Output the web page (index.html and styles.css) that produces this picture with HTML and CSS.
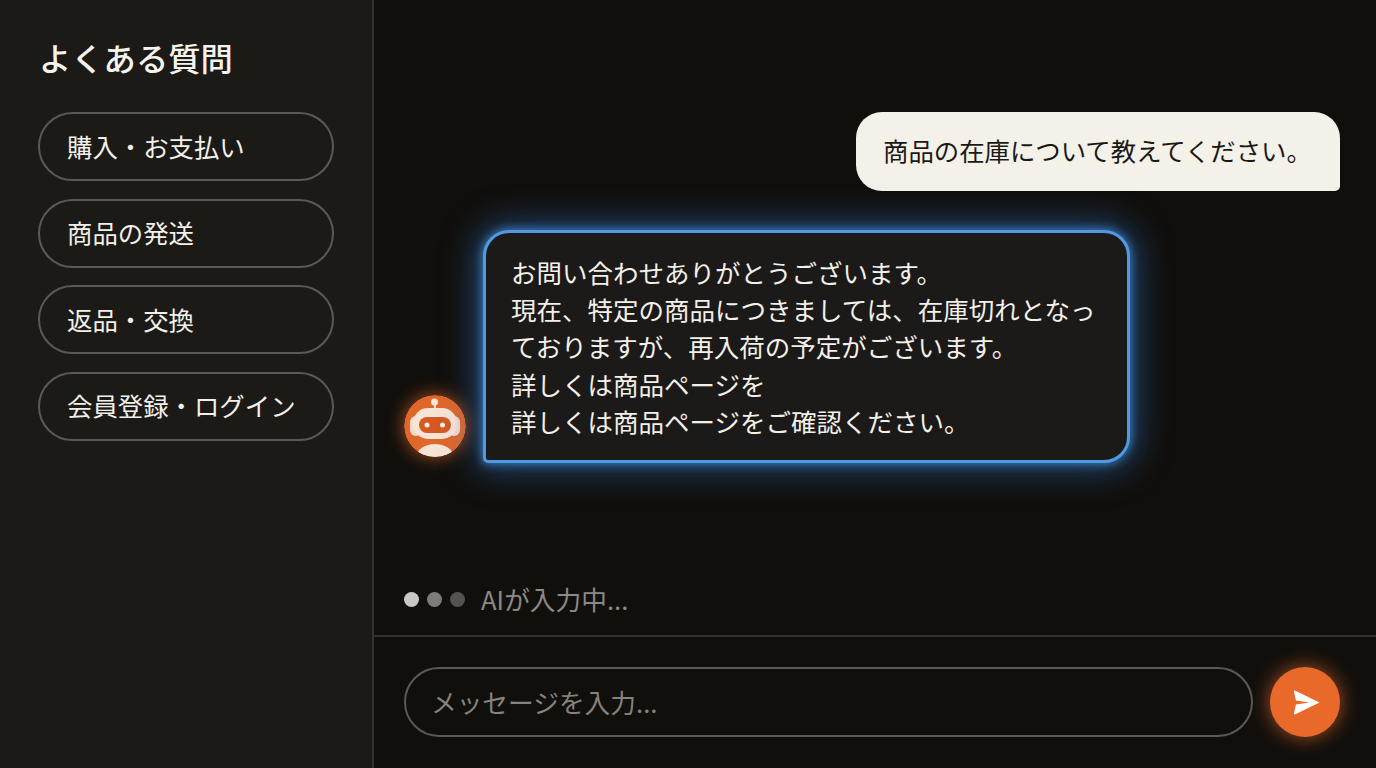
FILE: index.html
```html
<!DOCTYPE html>
<html lang="ja">
<head>
<meta charset="utf-8">
<title>よくある質問</title>
<link rel="stylesheet" href="styles.css">
</head>
<body>
<div class="app">
  <aside class="sidebar">
    <h1 class="title">よくある質問</h1>
    <nav class="faq">
      <a class="pill">購入・お支払い</a>
      <a class="pill">商品の発送</a>
      <a class="pill">返品・交換</a>
      <a class="pill">会員登録・ログイン</a>
    </nav>
  </aside>
  <main class="chat">
    <section class="messages">
      <div class="bubble-user">商品の在庫について教えてください。</div>
      <div class="ai-row">
        <svg class="avatar" viewBox="0 0 62 62" aria-hidden="true">
          <defs><clipPath id="avatar-clip"><circle cx="31" cy="31" r="31"/></clipPath></defs>
          <circle cx="31" cy="31" r="31" fill="#e0662a"/>
          <rect x="30" y="9" width="2" height="6" fill="#f6e6da"/>
          <circle cx="30.500" cy="7" r="3.500" fill="#f8e8dc"/>
          <rect x="6" y="21" width="12" height="20" rx="6" fill="#f4dccb"/>
          <rect x="44" y="21" width="12" height="20" rx="6" fill="#f4dccb"/>
          <rect x="9" y="13" width="44" height="31" rx="15" fill="#f8e4d6"/>
          <rect x="15" y="22" width="32" height="16" rx="8" fill="#d45a22"/>
          <circle cx="23" cy="30" r="2.500" fill="#fbeee4"/>
          <circle cx="38.500" cy="30" r="2.500" fill="#fbeee4"/>
          <ellipse cx="31" cy="61" rx="18" ry="12" fill="#f8e4d6" clip-path="url(#avatar-clip)"/>
        </svg>
        <div class="bubble-ai">お問い合わせありがとうございます。<br>現在、特定の商品につきましては、在庫切れとなっ<br>ておりますが、再入荷の予定がございます。<br>詳しくは商品ページを<br>詳しくは商品ページをご確認ください。</div>
      </div>
    </section>
    <div class="typing">
      <span class="dot dot-1"></span>
      <span class="dot dot-2"></span>
      <span class="dot dot-3"></span>
      <span class="typing-text">AIが入力中...</span>
    </div>
    <footer class="composer">
      <div class="input">メッセージを入力...</div>
      <button class="send" type="button" aria-label="送信">
        <svg viewBox="0 0 28 26" width="27" height="25" aria-hidden="true">
          <path d="M2.500 .7 L27.500 13 L2.500 25.300 Q.7 26 1 24 L3 15 L17 13 L3 11 L1 2 Q.7 0 2.500 .7Z" fill="#fff"/>
        </svg>
      </button>
    </footer>
  </main>
</div>
</body>
</html>
```
FILE: styles.css
```css
* { box-sizing: border-box; }
html, body { margin: 0; height: 100%; }
body {
  background: #110f0c;
  font-family: "Noto Sans CJK JP", "Noto Sans", sans-serif;
  overflow: hidden;
}
.app { display: flex; width: 1376px; height: 768px; }
.sidebar {
  width: 374px;
  flex: none;
  background: #1c1a16;
  border-right: 2px solid #35332f;
  padding: 34px 38px 0;
}
.title {
  margin: 0 0 32px 1px;
  font-size: 32.300px;
  line-height: 46px;
  font-weight: 500;
  color: #f5f3ee;
}
.faq { display: flex; flex-direction: column; gap: 17.500px; width: 296px; }
.pill {
  display: flex;
  align-items: center;
  height: 69px;
  padding: 0 27px 2px;
  border: 2px solid #5b5953;
  border-radius: 35px;
  font-size: 25.400px;
  color: #f2f0ea;
  white-space: nowrap;
}
.chat { flex: 1; display: flex; flex-direction: column; min-width: 0; }
.messages {
  height: 576px;
  padding: 112px 36px 0 30px;
  display: flex;
  flex-direction: column;
}
.bubble-user {
  align-self: flex-end;
  width: 484px;
  height: 79px;
  padding: 0 27px 3px;
  display: flex;
  align-items: center;
  background: #f4f1e9;
  border-radius: 26px 26px 5px 26px;
  font-size: 25.400px;
  color: #1a1917;
  white-space: nowrap;
}
.ai-row {
  margin-top: 39px;
  display: flex;
  align-items: flex-end;
  gap: 17px;
}
.avatar {
  width: 62px;
  height: 62px;
  flex: none;
  margin-bottom: 6px;
  border-radius: 50%;
  box-shadow: 0 0 18px rgba(235, 110, 45, 0.7);
}
.bubble-ai {
  width: 647px;
  height: 233px;
  padding: 20px 25px 0;
  background: #1c1a18;
  border: 3px solid #5199e0;
  border-radius: 26px 26px 26px 5px;
  box-shadow: 0 0 10px 1px rgba(70, 150, 235, 0.75), 0 0 34px 7px rgba(50, 125, 215, 0.5);
  font-size: 25.500px;
  line-height: 37.200px;
  color: #f2f0ea;
  white-space: nowrap;
}
.typing {
  height: 59px;
  padding: 0 0 14px 30px;
  display: flex;
  align-items: center;
  gap: 8px;
}
.dot { width: 15px; height: 15px; margin-top: 2px; border-radius: 50%; flex: none; }
.dot-1 { background: #c9c8c4; }
.dot-2 { background: #7d7c78; }
.dot-3 { background: #53524f; }
.typing-text { margin-left: 8px; font-size: 25.700px; color: #8b8984; }
.composer {
  flex: 1;
  border-top: 2px solid #33312d;
  padding: 30px 36px 0 30px;
  display: flex;
  gap: 17px;
  align-items: flex-start;
}
.input {
  flex: 1;
  height: 70px;
  padding: 0 25px 2px;
  display: flex;
  align-items: center;
  border: 2px solid #5b5953;
  border-radius: 35px;
  font-size: 25.700px;
  color: #85837e;
}
.send {
  width: 70px;
  height: 70px;
  flex: none;
  padding: 0 0 0 3px;
  border: 0;
  border-radius: 50%;
  background: #e8692a;
  display: flex;
  align-items: center;
  justify-content: center;
  box-shadow: 0 0 20px rgba(240, 110, 45, 0.7);
}
```
